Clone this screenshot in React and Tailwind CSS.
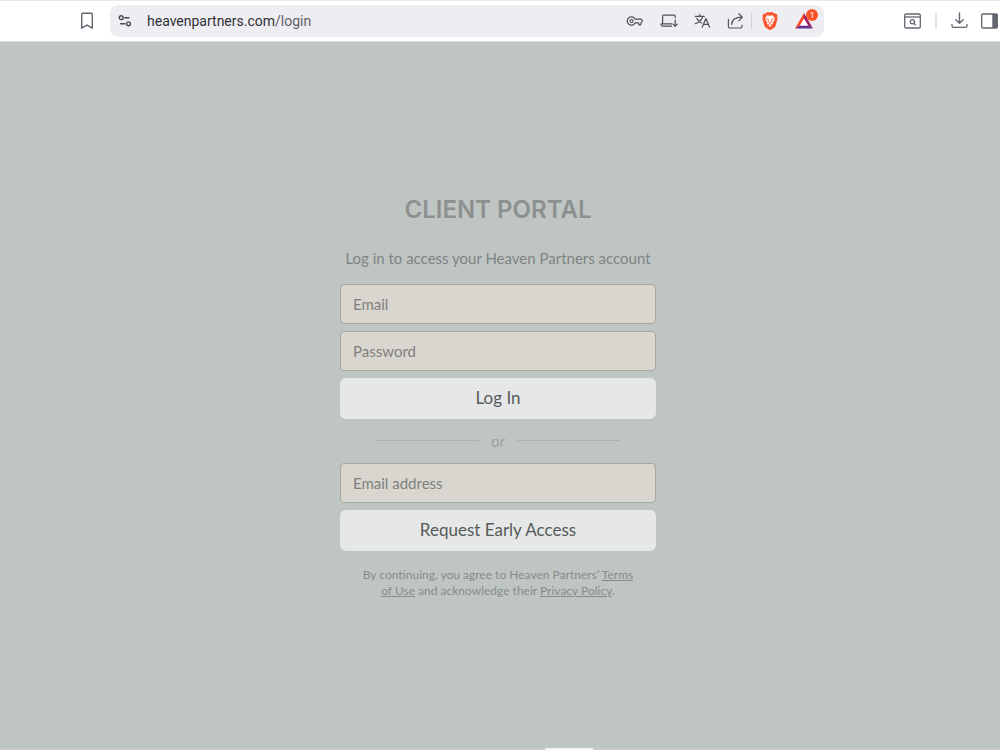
import { useState } from "react";

const inputStyle =
  "h-10 w-full rounded-[4px] border border-[#a5a7a1] bg-[#d9d6cf] px-3 text-[15px] text-[#4f5453] placeholder:text-[#7f807d] outline-none";
const buttonStyle =
  "h-[41px] w-full rounded-md bg-[#e5e8e7] text-[17px] text-[#555a5a]";

const ToolButton = ({ label, className = "", children }) => (
  <button type="button" aria-label={label} className={`shrink-0 ${className}`}>
    {children}
  </button>
);

const BookmarkIcon = () => (
  <svg width="14" height="18" viewBox="0 0 14 18" fill="none" stroke="#62666f" strokeWidth="1.4" strokeLinejoin="round">
    <path d="M1.7 2.4c0-.6.5-1.1 1.1-1.1h8.4c.6 0 1.1.5 1.1 1.1v13.8L7.6 13.3a1 1 0 0 0-1.2 0L1.7 16.2z" />
  </svg>
);

const SiteSettingsIcon = () => (
  <svg width="14" height="14" viewBox="0 0 14 14" fill="none" stroke="#45474d" strokeWidth="1.4">
    <circle cx="3.2" cy="3.7" r="1.9" />
    <path d="M6.3 3.7h5.2M2.2 9.8h5.2" />
    <circle cx="10.5" cy="9.8" r="1.9" />
  </svg>
);

const KeyIcon = () => (
  <svg width="18" height="16" viewBox="0 0 18 16" fill="none" stroke="#505259" strokeWidth="1.2" strokeLinejoin="round">
    <path d="M9.2 6.2h6l1.3 1.7-1.4 1.7-.4 2.2h-1.9l-.3-2H9.2A4.2 4.2 0 1 1 9.2 6.2z" />
    <circle cx="5.6" cy="8" r="1.5" />
  </svg>
);

const InstallIcon = () => (
  <svg width="18" height="16" viewBox="0 0 18 16" fill="none" stroke="#505259" strokeWidth="1.2" strokeLinecap="round" strokeLinejoin="round">
    <path d="M15.2 4.8V3.3c0-.7-.5-1.1-1.1-1.1H3.8c-.7 0-1.2.4-1.2 1.1v7.4" />
    <path d="M11.7 10.8H1.2v1c0 .8.6 1.4 1.4 1.4h9.1M15.2 7v6.2M13.1 11.2l2.1 2.1 2.1-2.1" />
  </svg>
);

const TranslateIcon = () => (
  <svg width="17" height="16" viewBox="0 0 17 16" fill="none" stroke="#505259" strokeWidth="1.2" strokeLinecap="round" strokeLinejoin="round">
    <path d="M1.2 3.3h9.2M5.8 1.4v1.9M2.8 5.4c1.2 2.2 2.8 3.6 4.9 4.6M8.6 3.3C8 6.5 5 9.3 1.2 10.7" />
    <path d="M8.2 14.2l3.7-8.6 3.7 8.6M9.4 11.4h5" />
  </svg>
);

const ShareIcon = () => (
  <svg width="17" height="18" viewBox="0 0 17 18" fill="none" stroke="#505259" strokeWidth="1.2" strokeLinecap="round" strokeLinejoin="round">
    <path d="M1.4 7.4v7c0 .9.7 1.6 1.6 1.6h10.4c.9 0 1.6-.7 1.6-1.6v-1.2" />
    <path d="M4.6 12.4c.2-4.2 3.1-7.2 10.4-7.2M11.8 1.8l3.6 3.4-3.6 3.6" />
  </svg>
);

const BraveIcon = () => (
  <svg width="16" height="18" viewBox="0 0 16 18">
    <path fill="#fb542b" d="M4.8.3h6.4l1.3 1.4 1.5-.1 1.5 2-.5 1.3.6 1.5-2 7.4c-.2.8-.6 1.3-1.2 1.7L8.7 17.7c-.4.3-1 .3-1.4 0L3.6 15.5c-.6-.4-1-.9-1.2-1.7l-2-7.4L1 4.9.5 3.6l1.5-2 1.5.1z" />
    <path fill="#fff" d="M5.3 3.3L8 3.7l2.7-.4 2.2 2.9-.5 1 .1 1.2-2 2.3.5 1.4-1 .7L8 15l-2-2.2-1-.7.5-1.4-2-2.3.1-1.2-.5-1z" />
    <path fill="none" stroke="#fb542b" strokeWidth=".8" d="M4 6.8l2.5.7-.5 2L8 10.6l2-1.1-.5-2 2.5-.7M8 10.6v1.2M6.2 12.8L8 11.8l1.8 1" />
  </svg>
);

const RewardsIcon = () => (
  <svg width="18" height="16" viewBox="0 0 18 16">
    <path fill="#ff4724" d="M9 0L0 15.6l5-3.1L9 5.7z" />
    <path fill="#9e1f63" d="M9 0l9 15.6-5-3.1L9 5.7z" />
    <path fill="#662d91" d="M0 15.6h18l-5-3.1H5z" />
    <path fill="#fff" d="M9 5.7l4 6.8H5z" />
  </svg>
);

const SearchTabsIcon = () => (
  <svg width="17" height="16" viewBox="0 0 17 16" fill="none" stroke="#62666f" strokeWidth="1.3">
    <rect x=".7" y="1" width="15.6" height="14" rx="1.3" />
    <path d="M.7 4h15.6" />
    <circle cx="8.4" cy="8.8" r="2.1" />
    <path d="M10 10.4l1.8 1.8" />
  </svg>
);

const DownloadIcon = () => (
  <svg width="17" height="17" viewBox="0 0 17 17" fill="none" stroke="#62666f" strokeWidth="1.4" strokeLinecap="round" strokeLinejoin="round">
    <path d="M8.5 1v10.2M4.8 7.7l3.7 3.6 3.7-3.6M1 12.6v1.2c0 1 .7 1.6 1.7 1.6h11.6c1 0 1.7-.6 1.7-1.6v-1.2" />
  </svg>
);

const SidebarIcon = () => (
  <svg width="17" height="16" viewBox="0 0 17 16">
    <rect x=".7" y="1" width="15.6" height="14" rx="1.3" fill="none" stroke="#62666f" strokeWidth="1.3" />
    <path fill="#62666f" d="M11.3 1h5v14h-5z" />
  </svg>
);

const BrowserBar = () => (
  <header className="flex h-[42px] shrink-0 items-center border-t border-b border-t-[#e8e8ea] border-b-[#d9dddc] bg-white pb-px pl-20">
    <ToolButton label="Bookmark this page">
      <BookmarkIcon />
    </ToolButton>

    <div className="ml-4 flex h-8 min-w-0 flex-1 items-center rounded-lg bg-[#eeedf2] pr-[11px] pl-2">
      <ToolButton label="Site settings">
        <SiteSettingsIcon />
      </ToolButton>
      <p className="ml-[15px] min-w-0 flex-1 truncate font-['Roboto','Noto_Sans',sans-serif] text-sm text-[#303136]">
        heavenpartners.com<span className="text-[#5e6067]">/login</span>
      </p>

      <ToolButton label="Passwords">
        <KeyIcon />
      </ToolButton>
      <ToolButton label="Install app" className="ml-4">
        <InstallIcon />
      </ToolButton>
      <ToolButton label="Translate" className="ml-4">
        <TranslateIcon />
      </ToolButton>
      <ToolButton label="Share" className="ml-4">
        <ShareIcon />
      </ToolButton>
      <span className="ml-[7px] h-4 w-px bg-[#cfcfd6]" />
      <ToolButton label="Brave Shields" className="ml-[10px]">
        <BraveIcon />
      </ToolButton>
      <ToolButton label="Brave Rewards" className="relative ml-[17px]">
        <RewardsIcon />
        <span className="absolute -top-1 -right-[5px] flex size-3 items-center justify-center rounded-full bg-[#fb542b] font-['Inter',sans-serif] text-[8px] leading-none text-white">
          1
        </span>
      </ToolButton>
    </div>

    <div className="flex shrink-0 items-center pr-[2px] pl-20">
      <ToolButton label="Search tabs">
        <SearchTabsIcon />
      </ToolButton>
      <span className="mx-[14px] h-4 w-[2px] bg-[#e2e2e5]" />
      <ToolButton label="Downloads">
        <DownloadIcon />
      </ToolButton>
      <ToolButton label="Sidebar" className="ml-[13px]">
        <SidebarIcon />
      </ToolButton>
    </div>
  </header>
);

const ClientPortal = () => {
  const [email, setEmail] = useState("");
  const [password, setPassword] = useState("");
  const [requestEmail, setRequestEmail] = useState("");

  const handleSubmit = (e) => {
    e.preventDefault();
  };

  return (
    <main className="flex flex-1 items-center justify-center pt-[2px] pr-1">
      <div className="flex w-full max-w-[316px] flex-col">
        <h1 className="text-center font-['Inter',sans-serif] text-2xl font-semibold whitespace-nowrap text-[#8c9190]">
          CLIENT PORTAL
        </h1>
        <p className="mt-5 text-center text-[15px] leading-6 whitespace-nowrap text-[#7e8483]">
          Log in to access your Heaven Partners account
        </p>

        <form onSubmit={handleSubmit} className="mt-[14px] flex flex-col gap-[7px]">
          <input
            type="email"
            aria-label="Email"
            placeholder="Email"
            value={email}
            onChange={(e) => setEmail(e.target.value)}
            className={inputStyle}
          />
          <input
            type="password"
            aria-label="Password"
            placeholder="Password"
            value={password}
            onChange={(e) => setPassword(e.target.value)}
            className={inputStyle}
          />
          <button type="submit" className={buttonStyle}>
            Log In
          </button>
        </form>

        <div className="my-[10px] flex items-center gap-3 px-9">
          <span className="h-px flex-1 bg-[#adb2b0]" />
          <span className="text-[15px] leading-6 text-[#9ba19f]">or</span>
          <span className="h-px flex-1 bg-[#adb2b0]" />
        </div>

        <form onSubmit={handleSubmit} className="flex flex-col gap-[7px]">
          <input
            type="email"
            aria-label="Email address"
            placeholder="Email address"
            value={requestEmail}
            onChange={(e) => setRequestEmail(e.target.value)}
            className={inputStyle}
          />
          <button type="submit" className={buttonStyle}>
            Request Early Access
          </button>
        </form>

        <p className="mt-4 px-[18px] text-center text-xs leading-4 text-[#868c8a]">
          By continuing, you agree to Heaven Partners’{" "}
          <a href="#terms" className="underline">
            Terms of Use
          </a>{" "}
          and acknowledge their{" "}
          <a href="#privacy" className="underline">
            Privacy Policy
          </a>
          .
        </p>
      </div>
    </main>
  );
};

const App = () => {
  return (
    <div className="flex min-h-screen flex-col bg-[#bfc5c3] font-['Lato',sans-serif]">
      <BrowserBar />
      <ClientPortal />
      <div className="flex h-[2px] justify-center bg-[#cbcbcb] pl-[138px]">
        <span className="h-full w-12 bg-[#f4f4f4]" />
      </div>
    </div>
  );
};

export default App;
